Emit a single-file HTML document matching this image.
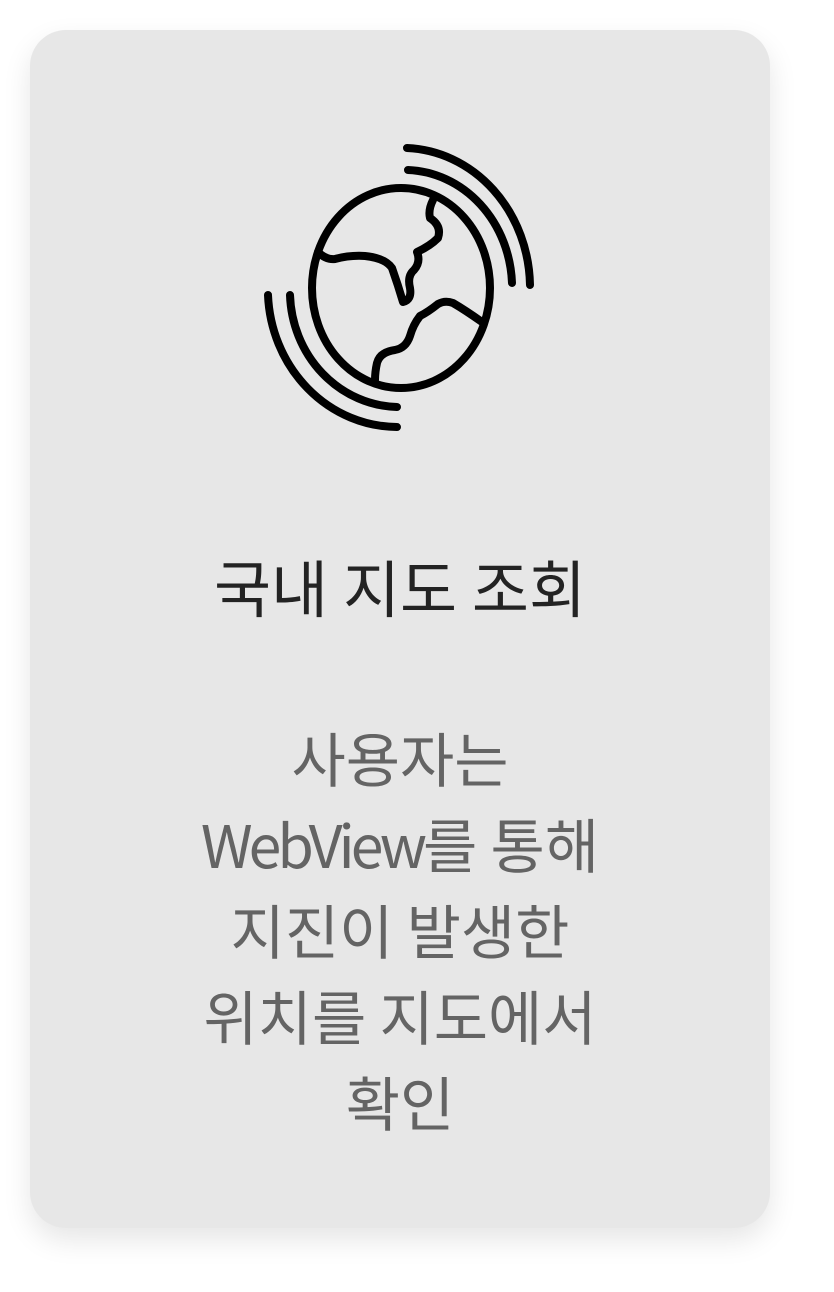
<!DOCTYPE html>
<html><head><meta charset="utf-8"><style>
html,body{margin:0;padding:0;background:#fff;}
body{width:834px;height:1292px;position:relative;overflow:hidden;font-family:"Noto Sans CJK KR",sans-serif;}
.card{position:absolute;left:30px;top:30px;width:740px;height:1198px;background:#e7e7e7;border-radius:36px;box-shadow:0 12px 28px rgba(0,0,0,0.10);}
.title{position:absolute;left:0;width:800px;top:542px;text-align:center;font-size:62px;color:#232323;line-height:86px;word-spacing:1px;}
.body{position:absolute;left:0;width:800px;top:714px;text-align:center;font-size:59px;color:#646464;line-height:86px;}
.lat{letter-spacing:-4px;}
</style></head><body>
<div class="card"></div>
<svg style="position:absolute;left:0;top:0" width="834" height="500" fill="none" stroke="#000" stroke-width="8" stroke-linecap="round" stroke-linejoin="round">
<ellipse cx="401" cy="288" rx="89" ry="100"/>
<path d="M407 148 A128 140 0 0 1 530 285"/>
<path d="M408 170 A108 118 0 0 1 512 283"/>
<path d="M268 295 A130 138 0 0 0 397 427"/>
<path d="M290 295 A110 116 0 0 0 397 407"/>
<path d="M318 252 Q326 260 335 259 Q350 255 365 256 Q385 258 392 268 Q398 285 403 302 Q412 300 410 288 Q407 276 414 270 Q421 262 417 252 Q430 246 438 238 Q442 226 430 218 Q428 210 433 200"/>
<path d="M482 322 Q465 310 453 303 Q445 300 438 304 Q428 312 420 316 Q413 325 410 336 Q406 348 395 350 Q380 352 377 363 Q375 372 375 380"/>
</svg>
<div class="title">국내 지도 조회</div>
<div class="body">사용자는<br><span class="lat">WebView</span>를 통해<br>지진이 발생한<br>위치를 지도에서<br>확인</div>
</body></html>
